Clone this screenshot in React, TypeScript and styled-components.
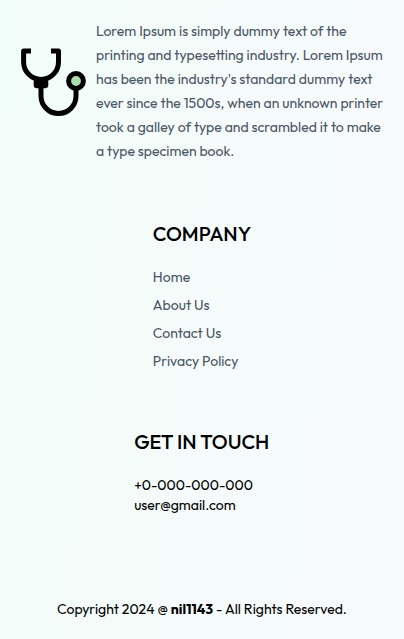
import React from 'react';
import styled, { createGlobalStyle } from 'styled-components';

const GlobalStyle = createGlobalStyle`
  *, *::before, *::after { box-sizing: border-box; }
  body {
    margin: 0;
    font-family: Outfit, Lato, sans-serif;
    color: #000;
  }
`;

const Footer = styled.footer`
  display: flex;
  flex-direction: column;
  align-items: center;
  height: 639px;
  padding: 19px 20px 0;
  overflow: hidden;
  background: linear-gradient(96deg, #f1fdf9 0%, #f3fcf9 30%, #f5fbfb 60%, #f8fafd 100%);
`;

const Brand = styled.section`
  display: flex;
  align-items: flex-start;
  gap: 10px;
  width: 100%;
`;

const Logo = styled.svg`
  flex: none;
  width: 66px;
  height: 70px;
  margin-top: 28px;
`;

const About = styled.p`
  flex: 1;
  margin: 0;
  font-size: 14px;
  line-height: 24px;
  color: #4a5565;
`;

const Section = styled.section<{ $inset?: number }>`
  display: flex;
  flex-direction: column;
  margin-top: 57px;
  padding-right: ${({ $inset = 0 }) => $inset}px;
`;

const Heading = styled.h2`
  margin: 0 0 19px;
  font-size: 20px;
  font-weight: 500;
  line-height: 28px;
`;

const List = styled.ul<{ $gap: number; $muted?: boolean }>`
  display: flex;
  flex-direction: column;
  gap: ${({ $gap }) => $gap}px;
  margin: 0;
  padding: 0;
  list-style: none;
  font-size: 14px;
  line-height: 20px;
  color: ${({ $muted }) => ($muted ? '#4a5565' : '#000')};
`;

const Copyright = styled.p`
  margin: 84px 0 0;
  font-size: 14px;
  line-height: 20px;
`;

const links = ['Home', 'About Us', 'Contact Us', 'Privacy Policy'];
const contacts = ['+0-000-000-000', 'user@gmail.com'];

function Stethoscope() {
  return (
    <Logo viewBox="20 47 66 70" fill="none" stroke="#000" strokeWidth="5" aria-hidden="true">
      <path d="M31 51H23.6V62A17.45 17.45 0 0 0 58.5 62V51H51" strokeLinejoin="round" />
      <path d="M37 79H45A3.3 3.3 0 0 1 48.3 82.3V85A3.3 3.3 0 0 1 45 88.3H37A3.3 3.3 0 0 1 33.7 85V82.3A3.3 3.3 0 0 1 37 79Z" fill="#000" stroke="none" />
      <path d="M41 86V96A17.5 17.5 0 0 0 76 96V89" />
      <circle cx="76" cy="81" r="7.4" fill="#a9dfaa" />
    </Logo>
  );
}

export default function App() {
  return (
    <>
      <GlobalStyle />
      <Footer>
        <Brand>
          <Stethoscope />
          <About>
            Lorem Ipsum is simply dummy text of the printing and typesetting industry. Lorem Ipsum has
            been the industry's standard dummy text ever since the 1500s, when an unknown printer took
            a galley of type and scrambled it to make a type specimen book.
          </About>
        </Brand>
        <Section>
          <Heading>COMPANY</Heading>
          <List $gap={8} $muted>
            {links.map((label) => (
              <li key={label}>{label}</li>
            ))}
          </List>
        </Section>
        <Section $inset={0.5}>
          <Heading>GET IN TOUCH</Heading>
          <List $gap={0}>
            {contacts.map((label) => (
              <li key={label}>{label}</li>
            ))}
          </List>
        </Section>
        <Copyright>
          Copyright 2024 @ <b>nil1143</b> - All Rights Reserved.
        </Copyright>
      </Footer>
    </>
  );
}
